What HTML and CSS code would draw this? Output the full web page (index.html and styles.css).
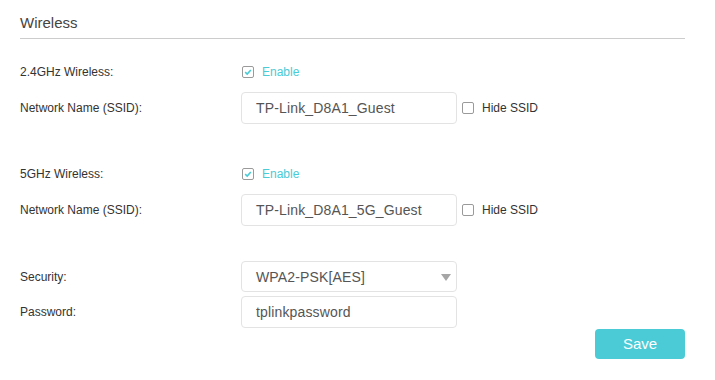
FILE: index.html
```html
<!DOCTYPE html>
<html lang="en">
<head>
    <meta charset="UTF-8">
    <title>Wireless</title>
    <link rel="stylesheet" href="styles.css">
</head>
<body>
    <div class="panel">
        <div class="title">Wireless</div>

        <div class="row first">
            <div class="label">2.4GHz Wireless:</div>
            <label class="check on"><span class="box">
                <svg viewBox="0 0 10 10"><path d="M2.2 5.2 4.2 7 7.8 3" fill="none" stroke="#4acbd6" stroke-width="1.6"/></svg>
            </span>Enable</label>
        </div>
        <div class="row field">
            <div class="label">Network Name (SSID):</div>
            <input class="text" type="text" value="TP-Link_D8A1_Guest">
            <label class="check"><span class="box"></span>Hide SSID</label>
        </div>

        <div class="row group">
            <div class="label">5GHz Wireless:</div>
            <label class="check on"><span class="box">
                <svg viewBox="0 0 10 10"><path d="M2.2 5.2 4.2 7 7.8 3" fill="none" stroke="#4acbd6" stroke-width="1.6"/></svg>
            </span>Enable</label>
        </div>
        <div class="row field">
            <div class="label">Network Name (SSID):</div>
            <input class="text" type="text" value="TP-Link_D8A1_5G_Guest">
            <label class="check"><span class="box"></span>Hide SSID</label>
        </div>

        <div class="row security">
            <div class="label">Security:</div>
            <div class="text select">WPA2-PSK[AES]<span class="arrow"></span></div>
        </div>
        <div class="row pass">
            <div class="label">Password:</div>
            <input class="text" type="text" value="tplinkpassword">
        </div>

        <div class="actions">
            <button class="save">Save</button>
        </div>
    </div>
</body>
</html>
```

FILE: styles.css
```css
*{
    box-sizing: border-box;
}
body{
    margin: 0;
    background-color: #fff;
    font-family: "Liberation Sans", Arial, sans-serif;
    color: #333;
}
.panel{
    width: 665px;
    margin-left: 20px;
}
.title{
    margin-top: 14px;
    font-size: 15px;
    line-height: 18px;
    color: #444;
    padding-bottom: 6px;
    border-bottom: 1px solid #ccc;
}
.row{
    display: flex;
    align-items: center;
}
.row.first{
    margin-top: 23px;
    height: 20px;
}
.row.group{
    margin-top: 40px;
    height: 20px;
}
.row.field{
    margin-top: 10px;
}
.row.security{
    margin-top: 35px;
}
.row.pass{
    margin-top: 4px;
}
.label{
    width: 221px;
    font-size: 12px;
    color: #333;
}
.text{
    width: 216px;
    height: 32px;
    border: 1px solid #e3e3e3;
    border-radius: 4px;
    padding: 0 0 0 14px;
    font-family: "Liberation Sans", Arial, sans-serif;
    font-size: 14px;
    letter-spacing: 0.15px;
    color: #555;
    outline: none;
    background: #fff;
}
.select{
    height: 31px;
    display: flex;
    align-items: center;
    position: relative;
}
.select .arrow{
    position: absolute;
    right: 5px;
    top: 12px;
    border-left: 5px solid transparent;
    border-right: 5px solid transparent;
    border-top: 7px solid #a6a6a6;
}
.check{
    display: flex;
    align-items: center;
    font-size: 12px;
    color: #333;
}
.row .check{
    margin-left: 1px;
}
.row.field .check{
    margin-left: 5px;
}
.check.on{
    color: #4acbd6;
}
.box{
    width: 12px;
    height: 12px;
    border: 1px solid #9a9a9a;
    border-radius: 2px;
    margin-right: 8px;
    display: flex;
}
.box svg{
    width: 10px;
    height: 10px;
}
.actions{
    display: flex;
    justify-content: flex-end;
    margin-top: 1px;
}
.save{
    width: 90px;
    height: 30px;
    padding: 0 0 2px;
    border: none;
    border-radius: 4px;
    background-color: #4acbd6;
    color: #fff;
    font-family: "Liberation Sans", Arial, sans-serif;
    font-size: 15px;
    cursor: pointer;
}
```
